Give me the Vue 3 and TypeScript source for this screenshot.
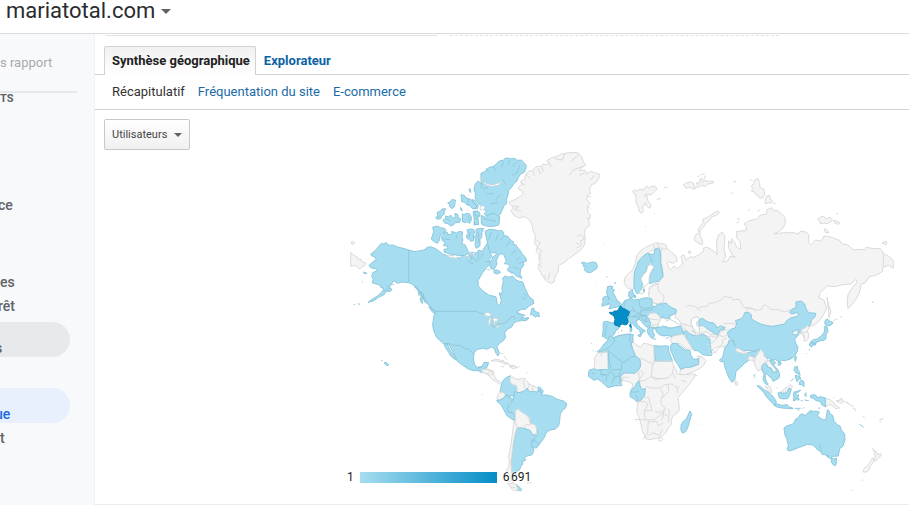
<script setup lang="ts">
import { ref } from 'vue'

type Tone = 'visited' | 'empty' | 'top' | 'water' | 'edge' | 'faint'

interface Sheet {
  x: number
  y: number
  shapes: [Tone, string][]
}

interface NavItem {
  label: string
  kind: string
}

const metric = ref('Utilisateurs')

const navItems: NavItem[] = [
  { label: 'ce', kind: 'cut after-title' },
  { label: 'es', kind: 'after-group' },
  { label: 'rêt', kind: 'cut' },
  { label: 's', kind: 'pill open' },
  { label: 'ue', kind: 'pill current' },
  { label: 't', kind: 'last' },
]

// Each sheet covers one part of the world, drawn at three units per pixel.
const sheets: Sheet[] = [
  {
    x: 620, y: 160, shapes: [
      ['empty', 'M123 262 133 264 145 268 156 278 168 288 172 303 158 310 145 305 141 308 146 322 152 330 162 318 172 326 188 312 186 298 182 290 192 284 198 300 212 290 222 292 234 286 252 272 250 264 262 262 276 270 286 276 292 284 290 262 290 240 298 222 306 216 314 226 314 244 312 268 318 290 308 306 322 304 330 288 346 292 336 284 325 262 326 242 334 252 334 236 344 246 350 262 362 268 360 244 350 234 350 214 378 212 380 200 372 192 388 182 410 178 420 166 440 162 440 150 455 143 460 152 474 152 486 164 495 172 496 190 488 206 476 214 462 222 490 218 520 218 536 222 540 214 558 216 566 224 566 248 574 254 586 240 604 244 612 228 636 232 660 242 666 252 682 254 702 270 720 268 735 270 738 262 762 266 782 266 790 280 808 290 820 302 820 325 806 316 788 322 788 334 768 346 748 350 736 368 724 372 718 398 708 418 696 434 684 446 682 424 684 404 696 384 712 366 708 358 692 372 668 374 645 380 620 378 600 400 596 414 612 420 620 444 612 462 598 482 585 494 566 502 558 512 566 530 556 542 546 520 530 524 500 540 400 570 340 562 292 560 265 582 240 570 200 540 176 512 190 508 178 480 165 474 168 462 98 428 85 400 100 380 115 370 128 350 130 340 123 310Z'],
      ['empty', 'M12 370l4-20 12-12 10-8 8-20 4-22 8-12 18-14 18-8 10-4 6-2 8 2 4 1 2 0 1 0 11 2 5 8-8 8-10-6-14 6-14 2-10 6-14 12-12 22-4 26-2 30-6 14-10 7-12-2z'],
      ['empty', 'M38 94l6-4 8 4 5-5 8-2 5 5 5-10 6-4 4 7 6-4 8-3 8 2 4 8-6 6-8 8-10 3-10-4-2 10 6-4 2 14 6 8 4 8-4 8-9-7-4-9-8 12 2 10-5 9-6-4-4-13-6-14-2-14 2-10-6-2z'],
      ['empty', 'M131 84l12-3M110 119l6-3 7 0M102 161l3 1M75 201l3 0M190 74l10-6 14-2 8 5-2 8 10 4-12 5-8-7-12 4zM228 68l8 4 4-14 6-4 0 12 10-4 10 2 14 0 0 5-16 3-8 8-12-4-8 6-6-4 4-6zM243 44l12-4M232 50l8-3M251 60l6-14M340 66l8-2M332 98l6 2'],
      ['empty', 'M222 240l4-14 10-8-2-10 8-12 8-8-2-10 14-6 12-8 12-8 8-3 4 5-8 8-14 4-8 12-10 6-8 14-10 10 0 14 6 12 2 16-8-2-10-6z'],
      ['empty', 'M400 72l5-12 8-5 6 12 1 16 12 5 2 14-5 10-9 4-6-9-7-3-4-9-9-2 4-7-4-6zM390 58l8 4M440 108l8-2 4 11 6 8-6 4-6-1-9 4-2-7zM460 128l7 3M385 152l5-3M412 154l8-5M352 176l8 1M350 188l8-2'],
      ['empty', 'M592 178l10-7 8-2 10 7 10-5 7 10-7 6-8 4-11-2-10 3-2-8zM640 181l8 2 12 5-4 5-12-3zM614 206l6 3 7 9-11-1-3-6zM649 162l5-2M786 250l8-6 7 2-2 7-7-1z'],
      ['empty', 'M204 276l6-4 4 5-5 5z'],
      ['faint', 'M790 280v40M125 350l3-10-3-28M98 252l10 22M112 250l6 14'],
      ['faint', 'M85 390l8-12 8-6 14-3M85 400l14-2 20 2M90 408l14 6 14-12M98 428l12-20 20-2M200 440l8-4 18 4 16 12M230 448l10-8 22 0 4-10 20-2 20-10 8-10 10 4 10 0 4 8 20-2 14 24 22 2 12 10M378 448l18-3 14 6 14-2 6-14 10 2 14 12 20-1 18 8 20-6 18-4'],
      ['visited', 'M756 426l4 1'],
    ],
  },
  {
    x: 340, y: 250, shapes: [
      ['empty', 'M32 8l10 8 10 5 4 8 7-2 1 8 14 4-4 8-8 3-5 7-6-2-6-7-8-1-9 2zM33-24l9-1 2 5-7 4z'],
      ['visited', 'M206 0 190 -5 172 -9 160 -15 148 -14 138 -22 130 -18 124 -20 115 -10 105 3 92 12 96 18 104 20 109 30 100 34 94 40 87 46 93 54 108 56 112 62 98 68 95 80 100 88 96 98 108 102 118 104 122 112 132 116 126 126 112 138 96 148 84 157 100 153 116 142 132 134 140 124 152 124 156 118 148 112 154 102 162 92 172 100 186 96 206 98 216 102 225 110 236 124 242 136 250 146 258 158 268 166 276 176 286 188 281 200 278 225 281 242 290 262 300 272 312 282 326 282 336 300 345 318 352 334 368 346 385 357 400 362 415 362 424 368 430 358 441 352 446 338 432 337 426 350 412 352 404 344 400 326 402 308 412 298 430 295 440 298 455 291 463 296 468 310 474 318 478 308 470 290 478 280 490 272 497 262 494 248 502 238 516 230 520 220 532 214 544 212 560 210 566 204 550 206 546 198 556 196 540 192 530 186 544 178 556 178 568 168 582 160 580 150 566 138 556 116 548 96 538 94 528 90 518 78 506 82 495 78 488 84 490 96 486 112 487 124 480 136 484 152 480 166 472 164 470 150 468 140 448 136 430 124 415 108 414 92 428 68 440 52 452 42 448 28 456 20 450 8 455 -10 446 -26 438 -14 426 4 416 0 408 12 396 6 384 22 372 10 350 18 325 18 308 12 296 2 285 -5 272 -10 262 -8 252 0 240 2 225 5Z'],
      ['visited', 'M312 282 318 296 326 306 332 318 347 330 342 316 334 306 326 292 322 282Z'],
      ['visited', 'M575 176l6-2 3 10 12 4 2 12-8-2-4 4-8-8-6 1zM545 202l10 3 10-2-2 6-14 4-6-6z'],
      ['visited', 'M238 126l10 3 4 12-6 3-8-12zM240 144l6 2 2 14-5-3zM266 170l18 12 4 9-10-4zM70 66l11 4-6 2zM66 95l3 1M41 164l4 0M53 161l7 2M133 337l6 1 7 6-2 3-8-3zM124 331l4 1M462 61l12-1 8 7-10 5-10-3zM478 128l5 4-4 3z'],
      ['water', 'M427 196l8-3 4-6 8 1 8 8-8 3-12-2zM444 227l1-14 6-10 8-3-7 10-4 17zM455 202l10 3 10 2-3 7-6-1-2 10-5 5 0-14zM462 231l9-4 12-2-10 7zM479 218l12-2-6 5z'],
      ['water', 'M318 18l10-3 12 3 9-9 10 8 8-3-4 8-14 3-14-2zM372 10l9 2 14-2-6 4-6 7-11-3zM398 10l8-4-4 12z'],
      ['edge', 'M286 184H410l6 4 14 4M455 199l5 14-2 18 8-1 10-9 18-2 12-9 8-10 8-1 4 10M312 281l16 0 14 5 20 0 14 12 8-3 9 8 7 10M206 0v98'],
      ['edge', 'M415 362l0-10 10 0M350 20l12 10M380 30l12 10 8 0M440 58l10 2M545 142l12 6M222 110l20 16 8 22M226 106l22 32 6 20M234 118l2 20M250 140l16 24 18 20M500 60l18 12M140 105l10 10-20 10M150 102l12 2M552 130l10 10M530 190l16 4M395 20l16 14M448 34l-12 2'],
      ['empty', 'M426 366l14-10 12 4 10 4-3 14 6 14-10-6-14-14zM453 333l12-5 16 2 12 6 15 6-16 0-8-5-14-4zM508 350l12-2 14 4-14 4zM482 348l10 3M537 350l4 0M478 309l12 2M492 318l8 11'],
    ],
  },
  {
    x: 340, y: 140, shapes: [
      ['visited', 'M278 262l14-4 9 5 12 2 5 6-6 8-9 3-4 10 0 8-7 10-9-4-9-9 4-12 3-10z'],
      ['visited', 'M304 290l12-14 6 1 2 7 13-2-2-8 14 5 10-5 9 2-2 14 3 10-4 11 10 3 5 10 6 14-10 8-18 1-14-3-14-2-18-6 0-8 12-2-2-8-12-1 6-9-9-6z'],
      ['visited', 'M287 234l6-8-2-8 10-6 7-6 10 1-6 8 2 6-8 6-4 9-10 2zM309 240l8-4 0-8 9 3 6-6 6 9 8-1-1-13 9 4 0 8 7 4-1 10-13 2-6 6-9 4-8-7-10-2z'],
      ['visited', 'M323 189l8-4 4-6 11 1-1 11-2 9-8 6-6-6 1-6zM363 164l10 2 6 8 10 4-2 10 3 8-9-1-6-8-10-2zM396 179l10 2 4 10 5 4-3 11-14-1-2-10zM388 146l4 3 0 9-4-4zM362 202l6 10-5-2z'],
      ['visited', 'M367 221l5 4 6-5 10 1 6 10 0 9-5 10-9-5-4 3-8-2zM400 213l9 3 6 8-2 14-9-2-4-9zM402 245l13-1-2 9-11 2z'],
      ['visited', 'M381 270l9-3 10 1 4 8-4 12 1 14-9 2-4-6-7-3-2-9 6-2zM408 268l12-3 11 1-5 11-1 16-5 5 0 20-11 7-4-9 2-17-4-10 6-4z'],
      ['edge', 'M300 226l-6 8M320 236l12 8M385 228l3 14M310 296l24 4M350 286l-2 10M390 276l-2 16M414 276l3 34M392 334l-6 10 10 6-4 12M416 336l-2 26M430 340l-8 14'],
    ],
  },
  {
    x: 470, y: 140, shapes: [
      ['visited', 'M33 100l12-6 12-12 12-2 10-8 9-9 14-3 4-6 16 2 12-1 8 6 12-1 8 8 7 8-2 12-4 9-12 6-6 10-4 10-10 9-6 10-9 9-2 14-4 12 0 14-8 6-6 15-6 12-12 4-14-4-16 3-6-6 7-7-9-8-2-8-12-6-4-9-7-9 2-12-5-12 4-18 8-9 5 3 7 10-3-12z'],
      ['water', 'M33 110l6 14 14 8 16 2 14-4 14-6-12 12-18 3-14-2-10-6-8-10zM30 202l8-6 8 7-6 7-9-1z'],
      ['visited', 'M-6 176l10 3 6 8 10 12-3 8-11-2-6-8-6-4zM14 214l10-1 6 7-2 10-12-4zM33 226l14 6 10-8 16-5 8 8 8 2-1 14-2 12-14 4-18 0-12-3-8-4 0-12zM12 236l12 0 2 18-12-2z'],
      ['visited', 'M45 274l10-5 12-1 12 3 9 2 8-2 6 10-2 6 12 1 6 7 7 8 6 2-2 8 9 2 5 8 6 6 7 12 10 10 4 12-10 4 2 7-6 9-4 4-2 16 6 12-10-4-9-4-8-9-9-3-8-9 7-4-2-9-14-2 6-8-4-10-4-10-12-2-4 8-7 14 3 6-2 8-8 12-9-4-3-16 6-9 5-10 8-6 0-7-14 2-8-12-2-10z'],
      ['edge', 'M48 84l8 12M70 80l10 14M100 66l-6 16M118 60l-4 14M140 66l-12 14M150 76l-10 24-14 6M30 140l12 6 12-4M50 162l20-2M98 118l8 14M90 164l-12 14M82 188l-20 4M40 236l38 8M64 276l-8 24M86 282l-10 20M104 290l-14 10M120 304l-12 16M138 330l-14 12M150 350l-14 14M160 366l-14 4M130 380l18 8'],
      ['empty', 'M118 186 132 180 152 168 158 164 158 154 145 147 148 138 156 134 152 124 166 118 165 108 174 94 186 92 194 84 206 78 216 80 218 72 232 74 240 68 230 62 244 54 262 48 274 42 296 38 322 38 334 48 340 66 347 76 334 84 328 92 344 90 350 102 362 94 374 98 390 104 386 116 376 130 364 134 358 150 362 160 352 166 350 180 362 190 352 200 354 218 362 226 356 244 360 256 346 266 344 280 346 296 342 318 332 330 316 342 296 356 286 366 266 376 264 396 256 408 252 426 244 430 230 424 218 410 212 396 204 384 210 368 206 356 210 346 198 334 202 320 194 310 196 288 188 268 186 252 178 240 164 230 146 234 132 226 122 212 130 204 122 196Z'],
      ['faint', 'M188 92l6 16M204 84l8 20M216 82l4 14M232 66l16 16M168 104l14 12M152 128l14 8M126 198l20 2-12 8 20 6M254 56l24 4M284 42l-8 20M326 44l-22 20M340 78l-30 12-12 16M344 98l-16 8M372 106l-10 14M352 168l10 2M352 198l10 8M350 236l10-2M320 290l14-6 10 14-12 4 2 14-14 8M316 308l12 4M196 298l14 10-8 14 14 12-10 14 10 12M204 372l14 10M222 404l6 12M240 398l-6 20'],
      ['visited', 'M334 369l8-3 8 5 10-3 8-2 10 2 4 10-2 8-10 6-8 6-12-2-8-7 5-6-8-4 4-4zM411 443l10-5M418 448l10-4M435 428l2 4'],
      ['empty', 'M403 312l2 0M409 411l2 0'],
    ],
  },
  {
    x: 460, y: 360, shapes: [
      ['empty', 'M64 31l10-3 10 2 10 3 6 8 3 8 8 11 10 5 8 6-6 2-8-3-10-8-10-6-8-8-6-7-12-4zM120 6l12-5M146 16l18 0M66 102l2 3'],
      ['visited', 'M124 76l4-12 6-8 10-6 8-3-4 8 2 11 10 6 10 2 3 12-7 6-2 17-12-2-2 4-12-7-10-4-8-4z'],
      ['empty', 'M150 66l0-10 6-6 8 5 10 3 20-4 4 8 8 6 8 8 8 2 8 4 6 6-6 12-8 2-10-2-6-12-18 6-10 6-6-3 0-10-3-11-10-2zM112 108l8-12 10 2 6 6-5 10-12 6-8-2z'],
      ['visited', 'M235 80l8 5 7 9-6 11-12 0 3-12z'],
      ['visited', 'M110 122l10-2 12-6 6-9 8 6 14 7-10 8-6 9 4 9 12 3 3 10 2 25-14-7-10-8-10-18-9-16-10-8z'],
      ['visited', 'M160 118l5-24 12 4 14-4 10-10 6 12 12-2 12 2 10-6 4 15 14 0 18 4 12 8 24 7 7 7-3 12-8 8-8 10-2 20-3 17-12 10-14 2-12 9-4 12-10 14-9 12-8-7-10-6 10-12 5-8-2-21-14-3-4-18-12-8-18-6-8-9-14 3-3-3-12-3-4-9 6-9z'],
      ['empty', 'M163 152l12-4 9 8 14 8 8 8 4 18 14 4 6 10-1 16-8 4-12-2-2-10-14-5-16-2-8-4-4-16z'],
      ['visited', 'M170 206l12-3 10 2 18 6 8 14 12 0-8 8-6 10-2 14 7 8 0 10-6 10-14 3-8 5 4 8-12 4 4 6-6 8-4 10-10 6-4 12-10-4-2-24 2-30 4-26 4-26z'],
      ['visited', 'M218 240l8 4 10 9-6 11-13-1-3-10zM170 374l16 15-4 3-10-2z'],
      ['empty', 'M162 182l4 8 6 12-6 16-5 24-4 32-4 30 1 28 4 16-4 14 10 8 6 8 4 14-10 0-8-4-6-8-8-12 4-4-2-12-4-22 6-8 2-18-2-14 4-20 4-24z'],
      ['edge', 'M165 182l0-30'],
      ['faint', 'M190 60l4 24M208 70l-4 14M220 78l-4 16M192 204l6-10 14 0M90 34l-10 10M84 46l14-4M148 370l12 2M150 380l16 4M208 170l4 22'],
      ['visited', 'M200 38l2 0'],
      ['empty', 'M200 371l7-3M209 371l6-3'],
    ],
  },
  {
    x: 580, y: 230, shapes: [
      ['water', 'M224 284l8-14 8-6 12 0 8 8 10-4 12 6 14 10 8 4-12 6-24-1-12-4-14 5zM334 268l8-6 10-2 8 10-10 6 0 10 8 8 0 14-6 6-10-6-2-12-7-10z'],
      ['visited', 'M164 124l6-14 4-14 8-10 10-10 10-6 14 10 0 14-6 6-10 10-2 12-8 12 2 10 2 8-6 10-2 12-6 12-8 6-6-8-4-14 0-26z'],
      ['visited', 'M206 70l10 4 6-2 2-14 8-4 8 6 2 18 0 22 4 16 1 10 2 14-14 14-12 2-14 5-4-12 2-10 8-10 6-12-6-10 1-14z'],
      ['water', 'M204 106l12-2 6 8-10 14-4 14-1 18-8 8-10 8 6 12-12 6-6-4 10-14 2-10-6-18 6-10 10-12z'],
      ['empty', 'M208 172l14-6 12-4 0 14 4 10 14 12-2 18-14 6-18-4-8-10-4-12 2-12z'],
      ['visited', 'M147 186l10-7 2 10 4 5-6 8-7 4-4-8zM162 196l6 2-2 6-5-2zM190 178l4 0-4 8z'],
      ['visited', 'M83 170l8-2 8 2-4 6 8 4-4 8 4 6 6 12 4 8 8 4-2 9-9 5-10 1-14 4 6-10-7-5 6-8-4-8-5-10-2-10zM70 202l8-4 9 4-2 10-1 12-10 2-8 3 0-8 4-6-3-6zM80 142l2-3M104 160l1-4M49 168l1 0'],
      ['visited', 'M70 276l10-2 14 4 10 0 6 7 11 4-7 8-7 6-4 10-8 6-10 4-6 4-6-6-6-2 2-14z'],
      ['visited', 'M119 228l10-8 6-9 12-3 6-4 10 6 18-3 16-4 18 3 2 12-2 8 10 4 12-8 14-1 8-2 6 8 14 8 10 4-1 10-10 6-11 3 4 6-10 2-9-5-8 2-4-8-9-5-12 2-14 5-10 10-14 3-12-4-14 4-10-4 6-16-8-5-14-3z'],
      ['empty', 'M198 262l14-12 16-1 10 10 4 10-6 10-2 12-14 4-14 2-8-10 0-12z'],
      ['visited', 'M145 263l14-5 14 4 1 8-6 5 4 10 10 8 14 10-4 3-4-2-2 8-5-2-2-10-12-8-10-12-8-4-6 2z'],
      ['visited', 'M174 264l12-6 14 0 6 8 6 14-2 10-8 2-10-8-8-10zM174 315l10-2-2 7-8-2zM150 296l5-2 0 10-4 2zM123 302l4 0M115 307l2 0'],
      ['visited', 'M202 298l8-6 14 0 4 4-12 2 4 10 4 8-6 10-8-6-6-10zM218 326l10 2M258 325l8-3'],
      ['visited', 'M228 292l12 0 10-4 14 6 14 0 12-4 12 0 6 12 4 12-12 2-18-2-6 6-14-4-10 2-14-4-10-10z'],
      ['visited', 'M308 306l8-4 12 8 12 6 14 2 14-6 14 8 8 8 2 26 4 22-16 0-12-2-14-12-10 0-12-14-12-18-2-14z'],
      ['top', 'M120 229l4 0 3 6 8 2 6 4 8 4-5 14-3 3 3 12-2 8-6 3-8-3-8 2-1 6-14-5-2-3 2-14-2-7-6-7-7-3-2-4 12 0 2-4 10 0 4-6zM152 281l2 12-4-2-1-6z'],
      ['edge', 'M80 282l-2 12-3 26M135 212l1 12-6 10M148 244l14-3-4-12M176 210l4 20 14 6 20-4M162 242l14 8 10-8 16-2 14 0 4-10M158 262l14-8 14-2M176 262l6-6 18 0M186 240l-6-4M180 250l6-8M200 262l-6 14M186 262l6 10 12 4'],
      ['faint', 'M204 262l10 6 24 2M212 286l22-2M312 292l14 14M300 278l20 10'],
    ],
  },
  {
    x: 580, y: 320, shapes: [
      ['empty', 'M270 55l14-8 24-4 10 12 12 20 8 12-18 0-20-16-24-1z'],
      ['empty', 'M300 150l24-10 30-4 4-22-6-6 14 2 12 12-6 12-10 10-16 8-20 8-20 10-6-4z'],
      ['visited', 'M272 77l4-6 14-1 26 20 14 2 2 12 8 14 16-2 0 16-24 10-16 0-14 6-8-14-10-14-6-16-6-12z'],
      ['empty', 'M86 48l16 4 18-6 28-4 10 2-2 12 2 10 10 8 14 8 8-12 14 2 18 6 20 2 14 2 10-2-2 12 6 20 10 22 8 14 4 14 14 2 32-2 8 1-4 12-16 20-18 22-14 16 2 14 2 18-2 10-16 12-6 12 0 14-10 12-4 10-14 14-16 6-20 4-12-2-4-10-6-12-6-26-6-20-6-12 2-18 2-14-4-14-12-14-2-12 2-14-12-6-18-4-14 2-16 4-14 0-24-16-8-12-10-14 2-14 0-18 10-14 10-10 12-12 6-14z'],
      ['visited', 'M52 96l12-12 8-12 10-8 6-16 14 5 10-5 20-4 18-2 10 2-2 10 2 10-8 10 6 14 8 16-4 10-30 14-10-2-36-26-2-6-14 2z'],
      ['visited', 'M84 92l0 0 40 32 8 4 22-18 14-2 12 10 2 20-6 12-12 10-22-1-10 0-10 10 4 28-20 0-22 6-22-20-10-6-10 4-8-6-9-6 2-18 14-5 10 4 24-2 10 2z'],
      ['visited', 'M222 77l22 2 10-2 12 2 0 14 6 16 6 14-52 0z'],
      ['visited', 'M172 186l6-4 2 14 4 12 12-2-2 20-6 8-6 8-14 2-6-8-12-6 0-10 4-12 10-6z'],
      ['visited', 'M330 273l5 10-2 6-4 14-6 20-6 12-10 4-4-8 0-16 6-10 10-8z'],
      ['edge', 'M62 94l24-10 18-20-2-12M84 92l8 54M125 128l0 20-30 2-14 16-20-2M150 44l0 16 8 24M60 148l4 14 12 2M80 166l-2 18M96 158l8 12-8 20M102 172l18-4 0 24M124 148l-8 20M44 160l-8 2M152 216l18 0 8-4M168 226l6 16'],
      ['faint', 'M64 108l0-12 22 0M222 78l0 54-4 0-36-18M278 122l-60 2M182 150l8 10-16 24M218 132l-4 36 8 10 18-2 24-2 14-14 2-20M178 184l20-4 14-10 30 8M196 198l16 6 32 0 8-10 24-2 14 10 10-2M242 208l8 14-8 18 2 14 12 10-8 18 16 6M192 232l14 0 4 16 6 24-24 0M168 246l26-2 10 8-12 24 4 22M165 298l40 2 20-2 14-12 14-8M205 300l-2 40-14 18M206 306l24-2 6 14 14-10M206 346l12-8 20 8 10-18M226 276l18 0 12-10M236 356l6-4 6 4-4 8-8-2zM264 194l2 20-20 20M290 200l4 20M266 266l2 20-4 22M252 282l-8 20M278 160l10 16M304 180l14 6M176 156l2 24M146 172l-18 0-4 22'],
      ['empty', 'M345 167l8 0'],
      ['visited', 'M357 317l1-1M366 314l1-1M34 70l2 0M38 93l3-2M45 95l2 0'],
    ],
  },
  {
    x: 690, y: 280, shapes: [
      ['visited', 'M112 157 122 148 135 144 140 132 136 122 150 118 160 110 164 98 174 96 184 104 184 116 196 124 212 132 232 137 248 139 264 136 284 132 290 122 302 114 318 110 328 104 320 98 304 102 298 97 306 88 318 82 318 66 334 63 344 72 348 86 356 98 378 100 374 112 364 120 362 134 350 142 336 152 326 160 322 158 328 150 318 150 306 157 312 165 326 164 314 178 318 192 324 200 322 214 314 228 300 238 284 242 272 240 268 246 254 238 242 240 236 234 226 238 222 222 212 214 204 210 190 214 180 212 166 212 152 208 138 202 130 192 132 182 116 172Z'],
      ['visited', 'M105 202 114 192 118 180 130 182 134 196 140 206 156 214 170 220 182 216 196 214 208 208 212 212 204 224 196 236 190 228 176 228 178 240 164 250 152 262 138 274 136 290 134 300 126 307 118 296 110 276 104 260 102 244 94 246 88 240 98 232Z'],
      ['empty', 'M137 203l12 4 12 8 8 2 2 5-14-2-18-6zM176 228l12 2 2 14-8-4-8 0zM134 302l8 4 2 8-6 3z'],
      ['empty', 'M194 236l10-16 8-12 8 10 4 12 8 8-4 8-10 6 0 14 2 14-7-14-8 8-6-10-6-12zM230 243l10-2 4 10 14 16-2 10-8 0-6-12-12-8z'],
      ['visited', 'M215 258l8-8 8 4 2 8 10 2 6 13 12-1-2-8-12-14-8-12 10-2 8 8-6 8 14 14 4 14-2 10-10 6-8 4-4-9-10-8-6-6-4 4 2 12 2 8 6 8-4 2-8-8-4-10 4-18-6-6zM264 248l9-2 0 8-8 2zM192 282l2 8M193 292l0 2'],
      ['empty', 'M226 318l6 4 6-4 6 10 2 10-8-2-6-8zM268 338l10-4 4-8 10-4 8-8 8 4-4 8-10 2-10 8-10 6z'],
      ['visited', 'M264 340l4-4 10 4 12-2 8-14 6 4-4 12-2 8-6 8-12 1-12-3-2-8zM201 317l10 2 12 10 10 6 12 10 8 10 6 10-2 10-10-6-10-10-10-12-6-10-8-8zM250 374l10-2 16 4 16-2 4 6 12 4 0 3-16-2-18-1-16-4zM314 385l18 0M322 390l6 0M310 344l2-8 10-2 10-4-6 6-10 4 4 6 6-2-2 8 4 8-6 0-4-8-2 10-6 0 2-10zM344 344l4-6 0 12zM344 360l12 2M332 362l6 0'],
      ['empty', 'M336 386l8-4M405 354l16 6 8 6 6 8 14 10-12 2-12-10-8-2-10 6zM438 362l12-2-4 5zM452 354l8 6M468 366l8 6'],
      ['visited', 'M362 346l10-2 8 4 2 6 8-4 16 4 0 27-12-8-2-8-16-4-6-6-8-2zM386 382l2 6'],
      ['visited', 'M314 261l8-2 2 12 4 4 2 12-6-6-6-2-6-8zM316 286l8 2 6 2 2 8-6-2-4 10-4-8zM328 306l8-6 6 6 0 14-6-6-8 0zM302 304l8-8M316 228l4 4-4 12-3-8zM302 234l5 0M348 222l2-2M357 211l2-4M260 324l2 0'],
      ['empty', 'M334 150l14-8 4-6 6 8-6 8 4 12-2 14-6 6-6-2 2-12-6-8zM411 52l4 20 8 22-6 20-2-30zM430 122l12-6M450 112l6-3'],
      ['visited', 'M408 118l6 0 6 6 10 4-8 8-8 2-8-4-2-8zM404 138l8 4 2 12-6 10 0 12-6 5-10 1-10 4-6 4-10-1-4-4 8-6 12-2 10-8 10-10 2-12zM360 188l8 0 0 8-4 6-6-6zM370 190l8 0-2 5-6 0z'],
      ['visited', 'M28 118l10-3 10 8 12 5 10 0 6 6 4 10 12-7 14 6-6 7-10 0-2 8-4 8-12-6-12-8-14-10-10-8-6 6-4-4z'],
      ['faint', 'M-16 130l14 10 8-4 4 12 18 14 20-8 14 10 14 0M20 170l-4-14-14-4M50 172l14-4 12 4 12-6 12 4 14-6M52 196l12-4 12-12 10-12M60 222l18-6 10-16 10-8-2-12 14-6M54 206l10 0 14 14M100 132l14-2 20 2 6 8M84 164l12-12 16-2M86 150l8-12M340 158l14-4'],
    ],
  },
  {
    x: 740, y: 370, shapes: [
      ['visited', 'M132 174l8-6 12-4 10-4 4-12 8-4 6-10 10-2 6 6 6-8 8-8 10 2 8 0 10 2-6 12 12 8 8 4 6-2 2-14 2-14 4 0 4 12 8 4 4 18 10 10 8 4 4 12 10 12 1 18-6 18-10 8-4 22-14 1-10 6-10-5-4-6-10 0-6-10-8-4-8-10-8-5-14-2-16 6-12 4-14 6-12 4-8-4 4-12-4-18-6-14z'],
      ['visited', 'M273 263l8 4 8-3 1 10-3 12-6 0-6-8zM358 163l6 4M364 167l7 4M334 360l2 2'],
      ['edge', 'M240 222l-2 8 6 4-2 8 4 4M258 256l10 2M210 126l6 6'],
      ['empty', 'M398 235l6 8 7 4 2 6 11-1-4 9-8 4-4 8-8-4 6-8-2-14zM398 264l6 4-4 10-8 8-4 14-8 6-10 0 0-8 10-10 8-8zM366 331l4-1'],
      ['empty', 'M292 94l12-6 8 6-10 6zM302 84l6 4M314 94l14 8M328 104l14 6M338 114l10 4M344 120l4 2M280 82l4 0M368 138l6 6M418 150l8-4M418 156l6-2M424 148l6-2'],
    ],
  },
]
</script>

<template>
  <div class="page">
    <header class="topbar">
      <button class="account" type="button">
        <span>mariatotal.com</span>
        <svg class="caret" viewBox="0 0 10 5" aria-hidden="true"><path d="M0 0h10L5 5z" /></svg>
      </button>
    </header>

    <div class="body">
      <aside class="sidebar">
        <div class="search">s rapport</div>
        <h2 class="group">TS</h2>
        <nav>
          <a v-for="item in navItems" :key="item.label" href="#" :class="['item', item.kind]">{{ item.label }}</a>
        </nav>
      </aside>

      <main class="report">
        <div class="segments"><span class="segment"></span><span class="segment dashed"></span></div>
        <div class="tabs">
          <a class="tab active" href="#">Synthèse géographique</a>
          <a class="tab" href="#">Explorateur</a>
        </div>
        <div class="subtabs">
          <a class="chosen" href="#">Récapitulatif</a>
          <a href="#">Fréquentation du site</a>
          <a href="#">E-commerce</a>
        </div>
        <section class="content">
          <div class="picker">
            <select v-model="metric" aria-label="Utilisateurs">
              <option>Utilisateurs</option>
            </select>
            <svg class="caret small" viewBox="0 0 10 5" aria-hidden="true"><path d="M0 0h10L5 5z" /></svg>
          </div>
          <figure class="map">
            <svg class="world" viewBox="340 150 569 354" aria-hidden="true">
              <g v-for="(sheet, i) in sheets" :key="i" :transform="`translate(${sheet.x} ${sheet.y}) scale(0.33333)`">
                <path v-for="(shape, j) in sheet.shapes" :key="j" :class="shape[0]" :d="shape[1]" />
              </g>
            </svg>
            <figcaption class="legend">
              <span>1</span>
              <span class="scale"></span>
              <span>6&#8239;691</span>
            </figcaption>
          </figure>
        </section>
      </main>
    </div>
  </div>
</template>

<style>
body {
  margin: 0;
  background: #fff;
}
</style>

<style scoped>
.page {
  display: flex;
  flex-direction: column;
  min-height: 100vh;
  overflow: hidden;
  font-family: Roboto, "Liberation Sans", sans-serif;
  color: #222;
}

a {
  text-decoration: none;
}

.topbar {
  box-sizing: border-box;
  height: 34px;
  border-bottom: 1px solid #dcdcde;
}

.account {
  display: flex;
  align-items: center;
  gap: 6px;
  height: 22px;
  padding: 0 6px;
  border: 0;
  background: none;
  font: 400 22px/22px Roboto, sans-serif;
  color: #2b2c30;
}

.caret {
  width: 10px;
  height: 5px;
  fill: #5f6368;
}

.body {
  display: grid;
  grid-template-columns: 94px minmax(0, 1fr);
  flex: 1;
}

.sidebar {
  overflow: hidden;
  background: #f8f9fb;
  color: #5f6368;
}

.search {
  margin-right: 17px;
  padding: 18px 0 17px;
  border-bottom: 2px solid #e6e7ea;
  font-size: 13px;
  line-height: 22px;
  color: #a9abaf;
}

.group {
  margin: 0;
  font-size: 11px;
  font-weight: 700;
  line-height: 12px;
}

nav {
  display: flex;
  flex-direction: column;
  font-size: 14px;
  font-weight: 500;
  line-height: 24px;
}

.item {
  color: #5f6368;
}

.cut {
  margin-left: -2px;
}

.after-title {
  margin-top: 88px;
}

.after-group {
  margin-top: 53px;
}

.pill {
  box-sizing: border-box;
  height: 35px;
  margin-right: 24px;
  margin-left: -5px;
  padding-top: 14px;
  border-radius: 0 18px 18px 0;
}

.open {
  margin-top: 4px;
  background: #e8e9ec;
}

.current {
  margin-top: 31px;
  background: #e8effd;
  color: #1a6be0;
}

.last {
  margin-top: 3px;
}

.report {
  margin-bottom: 1px;
  border-left: 1px solid #f0f1f3;
  box-shadow: 0 1px 0 #ececee;
}

.segments {
  display: flex;
  gap: 10px;
  padding-left: 10px;
}

.segment {
  width: 333px;
  height: 1px;
  border-bottom: 1px solid #e2e2e2;
  border-radius: 0 0 3px 3px;
}

.dashed {
  border-bottom-style: dashed;
}

.tabs {
  display: flex;
  margin-top: 10px;
  padding-left: 9px;
  border-bottom: 1px solid #d2d2d2;
}

.tab {
  padding: 0 5px 0 7px;
  border: 1px solid transparent;
  border-bottom: 0;
  font-size: 13px;
  font-weight: 700;
  line-height: 27px;
  color: #0b62a4;
}

.active {
  margin-bottom: -1px;
  padding-bottom: 1px;
  border-color: #d2d2d2;
  border-radius: 2px 2px 0 0;
  background: linear-gradient(#f1f1f1, #fff);
  color: #222;
}

.subtabs {
  display: flex;
  gap: 13px;
  padding: 0 17px;
  border-bottom: 1px solid #d2d2d2;
  font-size: 13px;
  line-height: 34px;
}

.subtabs a {
  color: #1a6ba6;
}

.subtabs .chosen {
  color: #333;
}

.content {
  display: grid;
  padding: 9px 0 0 9px;
}

.picker {
  display: flex;
  align-items: center;
  justify-self: start;
  box-sizing: border-box;
  width: 86px;
  height: 31px;
  padding-right: 7px;
  border: 1px solid #c8c8c8;
  border-radius: 2px;
  background: linear-gradient(#fff, #f0f0f0);
}

.picker select {
  flex: 1;
  min-width: 0;
  padding: 0 0 0 7px;
  appearance: none;
  border: 0;
  background: none;
  font: 400 11px/16px Roboto, sans-serif;
  color: #444;
}

.small {
  width: 8px;
  height: 4px;
  flex: none;
}

.map {
  position: relative;
  margin: 0 0 0 236px;
}

.world {
  display: block;
  width: 100%;
  height: auto;
}

.world path {
  stroke-width: 3;
  stroke-linejoin: round;
}

.visited {
  fill: #a6ddf0;
  stroke: #8dc8dc;
}

.empty {
  fill: #f4f4f4;
  stroke: #dadada;
}

.top {
  fill: #058dc7;
  stroke: #0580b5;
}

.water {
  fill: #fff;
  stroke: #c5d5db;
}

.edge {
  fill: none;
  stroke: #8bbfd1;
  stroke-opacity: 0.7;
}

.faint {
  fill: none;
  stroke: #dadada;
}

.legend {
  position: absolute;
  bottom: 19px;
  left: 7px;
  display: flex;
  align-items: center;
  gap: 6px;
  font-size: 12px;
  line-height: 16px;
  text-shadow: 0 0 2px #fff, 0 0 2px #fff, 0 0 2px #fff;
}

.scale {
  width: 137px;
  height: 11px;
  background: linear-gradient(to right, #a6ddf0, #058dc7);
}
</style>
